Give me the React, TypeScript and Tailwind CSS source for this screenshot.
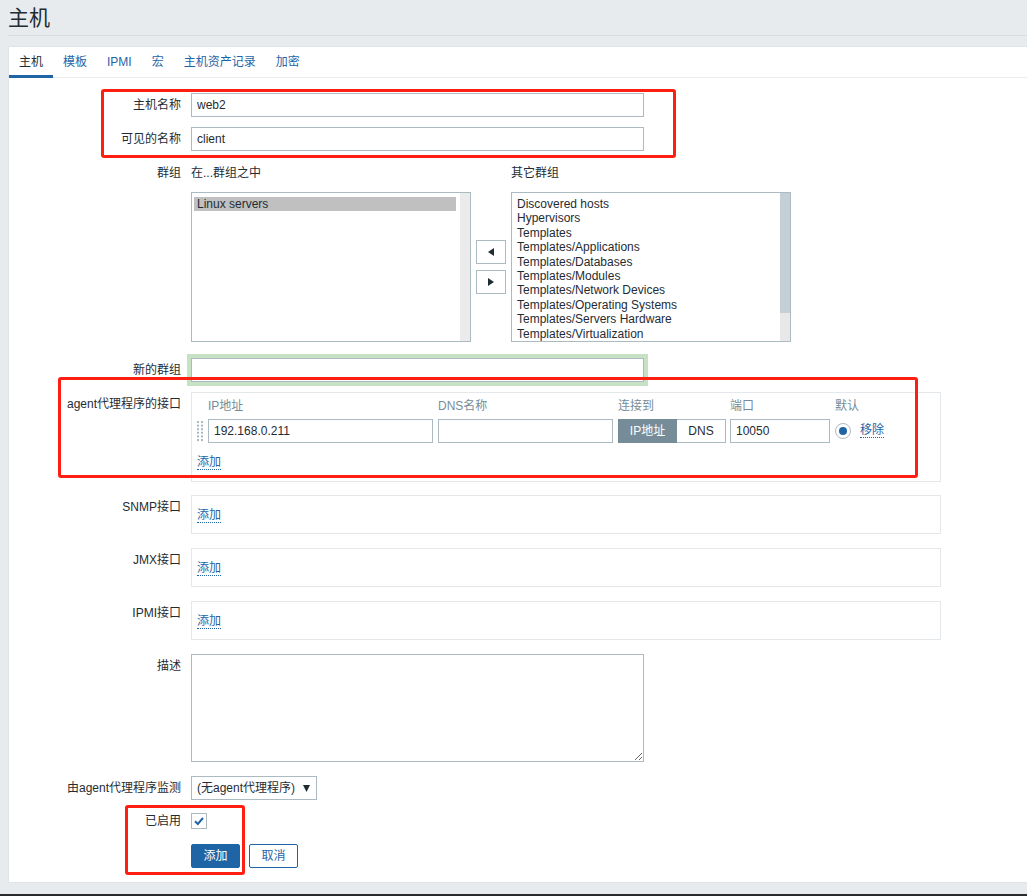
import React from "react";

const inputCls =
  "h-[24px] border border-[#acbbc2] bg-white px-[5px] text-[12px] text-[#1f2c33] outline-none";

function FieldLabel({ children }: { children: React.ReactNode }) {
  return <div className="h-[24px] w-[172px] shrink-0 pt-[1px] text-right leading-[23px]">{children}</div>;
}

function Row({
  label,
  className = "",
  children,
}: {
  label: string;
  className?: string;
  children: React.ReactNode;
}) {
  return (
    <div className={"flex " + className}>
      <FieldLabel>{label}</FieldLabel>
      <div className="ml-[10px]">{children}</div>
    </div>
  );
}

function AddLink() {
  return (
    <span className="border-b border-dotted border-[#1f65a6] leading-[13px] text-[#1f65a6]">添加</span>
  );
}

function EmptyIface({ label, className }: { label: string; className: string }) {
  return (
    <Row label={label} className={className}>
      <div className="h-[39px] w-[750px] border border-[#e4e8eb] pl-[5px] pt-[8px]">
        <div className="flex h-[24px] items-center">
          <AddLink />
        </div>
      </div>
    </Row>
  );
}

function Arrow({ dir }: { dir: "left" | "right" }) {
  return (
    <div className="flex h-[24px] w-[30px] items-center justify-center border border-[#acbbc2] bg-white">
      <svg width="6" height="8" viewBox="0 0 6 8">
        {dir === "left" ? <path d="M6 0 L0 4 L6 8 Z" fill="#1f2c33" /> : <path d="M0 0 L6 4 L0 8 Z" fill="#1f2c33" />}
      </svg>
    </div>
  );
}

const otherGroups = [
  "Discovered hosts",
  "Hypervisors",
  "Templates",
  "Templates/Applications",
  "Templates/Databases",
  "Templates/Modules",
  "Templates/Network Devices",
  "Templates/Operating Systems",
  "Templates/Servers Hardware",
  "Templates/Virtualization",
];

function DragHandle() {
  const ys = [0, 3.6, 7.2, 10.8, 14.4, 18];
  return (
    <svg width="6" height="20" viewBox="0 0 6 20">
      {ys.map((y) => (
        <g key={y}>
          <rect x="0" y={y} width="2" height="2" fill="#acbbc2" />
          <rect x="4" y={y} width="2" height="2" fill="#acbbc2" />
        </g>
      ))}
    </svg>
  );
}

const tabs = ["主机", "模板", "IPMI", "宏", "主机资产记录", "加密"];

export default function App() {
  return (
    <div className="relative flex h-[896px] flex-col overflow-hidden bg-[#e8ebee] font-['Liberation_Sans',Arial,'Noto_Sans_CJK_SC',sans-serif] text-[12px] text-[#1f2c33]">
      {/* header */}
      <div className="ml-[8px] h-[36px] shrink-0 border-b border-[#d9dee1]">
        <h1 className="text-[21px] leading-[35px] font-normal">主机</h1>
      </div>

      {/* panel */}
      <div className="mt-[10px] ml-[8px] h-[837px] shrink-0 border-t border-b border-l border-[#dfe4e7] bg-white">
        <ul className="flex h-[31px] border-b border-[#ebeef0]">
          {tabs.map((t, i) => (
            <li
              key={t}
              className={
                i === 0
                  ? "-mb-px flex h-[31px] items-center border-b-[3px] border-[#1f65a6] px-[10px] pt-[2px] text-[#1f2c33]"
                  : "-mb-px flex h-[31px] items-center border-b-[3px] border-transparent px-[10px] pt-[2px] text-[#1f65a6]"
              }
            >
              {t}
            </li>
          ))}
        </ul>

        <div className="pt-[15px]">
          <Row label="主机名称">
            <input className={inputCls + " w-[453px]"} defaultValue="web2" readOnly />
          </Row>
          <Row label="可见的名称" className="mt-[10px]">
            <input className={inputCls + " w-[453px]"} defaultValue="client" readOnly />
          </Row>

          {/* groups */}
          <Row label="群组" className="mt-[10px]">
            <div className="flex">
              <div>
                <div className="h-[24px] pt-[1px] leading-[23px]">在...群组之中</div>
                <div className="mt-[7px] flex h-[150px] w-[280px] border border-[#acbbc2] bg-white">
                  <div className="flex-1 pt-[4px] pl-[2px]">
                    <div className="bg-[#c0c0c0] px-[3px] leading-[14px]">Linux servers</div>
                  </div>
                  <div className="ml-[4px] w-[10px] bg-[#ebebeb]" />
                </div>
              </div>
              <div className="mt-[31px] ml-[5px] flex h-[150px] flex-col justify-center gap-[6px]">
                <Arrow dir="left" />
                <Arrow dir="right" />
              </div>
              <div className="ml-[5px]">
                <div className="h-[24px] pt-[1px] leading-[23px]">其它群组</div>
                <div className="mt-[7px] flex h-[150px] w-[280px] overflow-hidden border border-[#acbbc2] bg-white">
                  <div className="flex-1 pt-[4px] pl-[5px]">
                    {otherGroups.map((g) => (
                      <div key={g} className="leading-[14.4px]">
                        {g}
                      </div>
                    ))}
                  </div>
                  <div className="flex w-[10px] flex-col bg-[#e8e8e8]">
                    <div className="h-[120px] bg-[#c5d0d6]" />
                  </div>
                </div>
              </div>
            </div>
          </Row>

          <Row label="新的群组" className="mt-[16px]">
            <input className={inputCls + " w-[453px] ring-4 ring-[#c6e1c4]"} readOnly />
          </Row>

          {/* agent interfaces */}
          <Row label="agent代理程序的接口" className="mt-[10px]">
            <div className="h-[90px] w-[750px] border border-[#e4e8eb] pl-[5px]">
              <div className="flex h-[24px] items-center pt-[2px] text-[#768d99]">
                <div className="w-[11px]" />
                <div className="w-[225px]">IP地址</div>
                <div className="ml-[5px] w-[175px]">DNS名称</div>
                <div className="ml-[5px] w-[108px]">连接到</div>
                <div className="ml-[4px] w-[100px]">端口</div>
                <div className="ml-[5px]">默认</div>
              </div>
              <div className="mt-[2px] flex h-[24px] items-center">
                <DragHandle />
                <input className={inputCls + " ml-[5px] w-[225px]"} defaultValue="192.168.0.211" readOnly />
                <input className={inputCls + " ml-[5px] w-[175px]"} readOnly />
                <div className="ml-[5px] flex h-[24px] w-[108px]">
                  <div className="flex w-[59px] items-center justify-center bg-[#768d99] text-white">IP地址</div>
                  <div className="flex flex-1 items-center justify-center border border-l-0 border-[#acbbc2]">DNS</div>
                </div>
                <input className={inputCls + " ml-[4px] w-[100px]"} defaultValue="10050" readOnly />
                <div className="ml-[5px] flex h-[16px] w-[16px] items-center justify-center rounded-full border border-[#acbbc2]">
                  <div className="h-[8px] w-[8px] rounded-full bg-[#1f65a6]" />
                </div>
                <span className="ml-[9px] border-b border-dotted border-[#1f65a6] leading-[13px] text-[#1f65a6]">移除</span>
              </div>
              <div className="mt-[8px] flex h-[24px] items-center">
                <AddLink />
              </div>
            </div>
          </Row>

          <EmptyIface label="SNMP接口" className="mt-[13px]" />
          <EmptyIface label="JMX接口" className="mt-[14px]" />
          <EmptyIface label="IPMI接口" className="mt-[14px]" />

          <Row label="描述" className="mt-[14px]">
            <textarea className="block h-[108px] w-[453px] border border-[#acbbc2] bg-white outline-none" readOnly />
          </Row>

          <Row label="由agent代理程序监测" className="mt-[14px]">
            <div className="flex h-[24px] w-[126px] items-center justify-between border border-[#acbbc2] pr-[6px] pl-[5px]">
              <span>(无agent代理程序)</span>
              <svg width="7" height="7" viewBox="0 0 7 7">
                <path d="M0 0 L7 0 L3.5 7 Z" fill="#1f2c33" />
              </svg>
            </div>
          </Row>

          <Row label="已启用" className="mt-[9px]">
            <div className="flex h-[24px] items-center">
              <div className="flex h-[16px] w-[16px] items-center justify-center border border-[#acbbc2]">
                <svg width="12" height="12" viewBox="0 0 12 12">
                  <path d="M2 6.2 L4.8 9 L10 3" fill="none" stroke="#1f65a6" strokeWidth="2" />
                </svg>
              </div>
            </div>
          </Row>

          <div className="mt-[11px] flex pl-[182px]">
            <button className="h-[24px] w-[49px] rounded-[2px] border border-[#1f65a6] bg-[#1f65a6] text-white">添加</button>
            <button className="ml-[9px] h-[24px] w-[49px] rounded-[2px] border border-[#1f65a6] bg-white text-[#1f65a6]">取消</button>
          </div>
        </div>
      </div>

      <div className="flex-1" />
      <div className="h-[2px] shrink-0 bg-[#2b2b2b]" />

      {/* red annotation boxes */}
      <div className="absolute top-[89px] left-[101px] h-[69px] w-[575px] rounded-[3px] border-[3px] border-[#ff1e12]" />
      <div className="absolute top-[377px] left-[58px] h-[101px] w-[860px] rounded-[3px] border-[3px] border-[#ff1e12]" />
      <div className="absolute top-[805px] left-[125px] h-[70px] w-[120px] rounded-[3px] border-[3px] border-[#ff1e12]" />
    </div>
  );
}
